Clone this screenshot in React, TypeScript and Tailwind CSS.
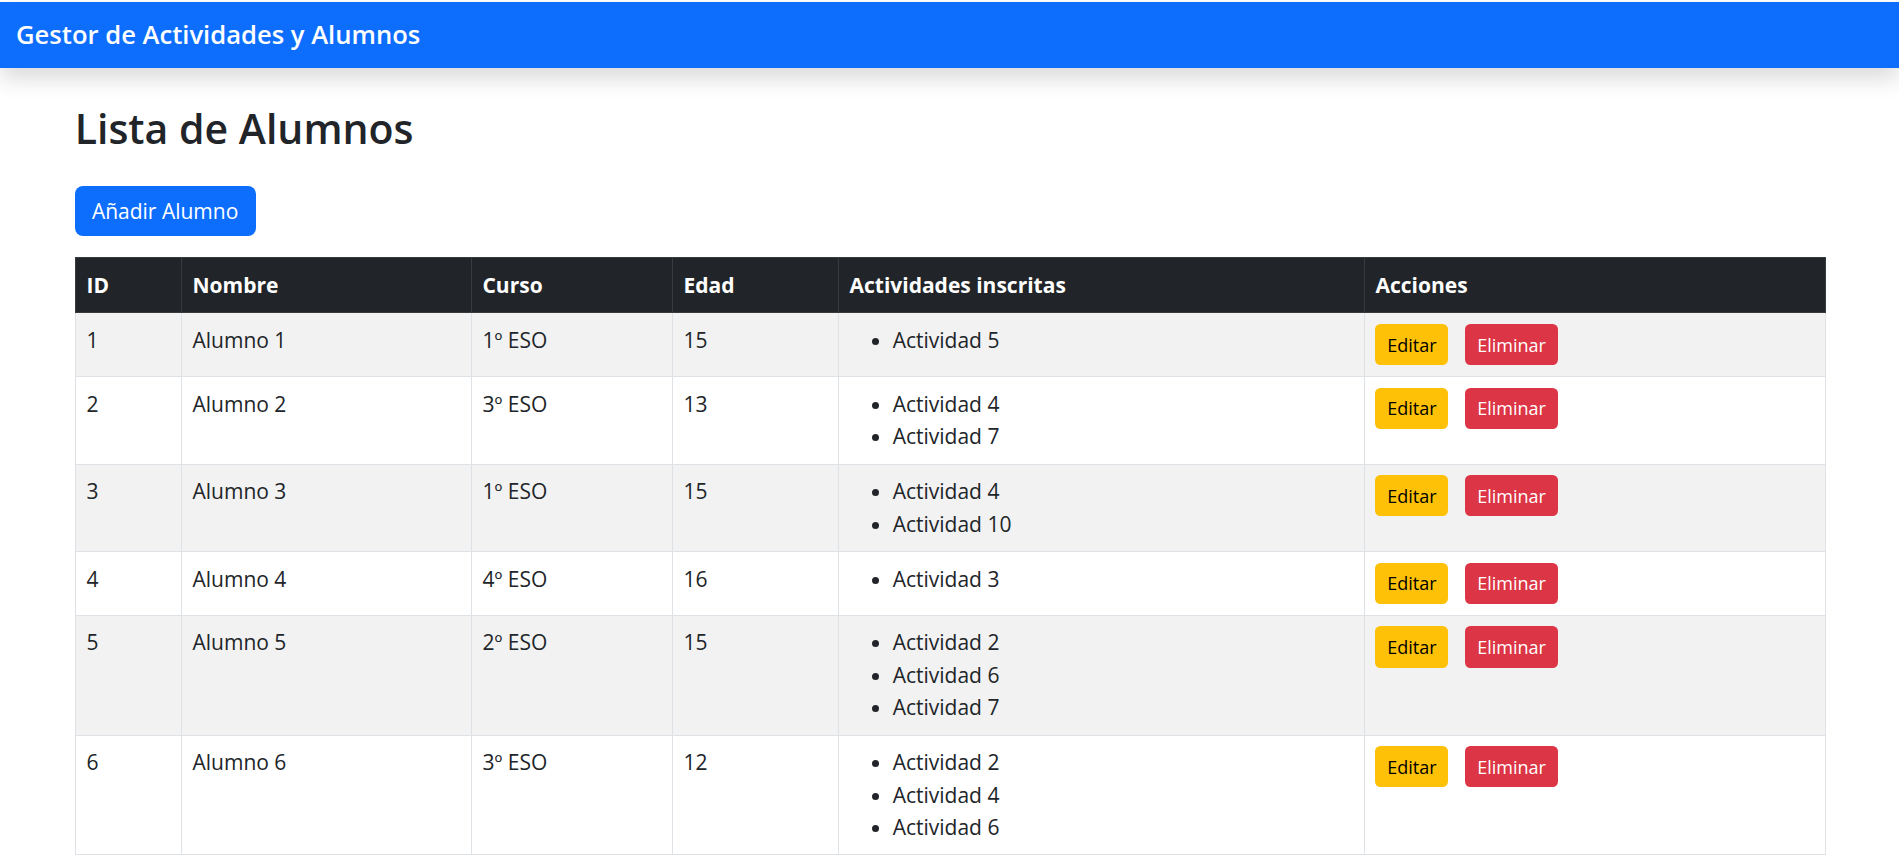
import React from 'react';

type Alumno = {
  id: number;
  nombre: string;
  curso: string;
  edad: number;
  actividades: string[];
};

const alumnos: Alumno[] = [
  { id: 1, nombre: 'Alumno 1', curso: '1º ESO', edad: 15, actividades: ['Actividad 5'] },
  { id: 2, nombre: 'Alumno 2', curso: '3º ESO', edad: 13, actividades: ['Actividad 4', 'Actividad 7'] },
  { id: 3, nombre: 'Alumno 3', curso: '1º ESO', edad: 15, actividades: ['Actividad 4', 'Actividad 10'] },
  { id: 4, nombre: 'Alumno 4', curso: '4º ESO', edad: 16, actividades: ['Actividad 3'] },
  { id: 5, nombre: 'Alumno 5', curso: '2º ESO', edad: 15, actividades: ['Actividad 2', 'Actividad 6', 'Actividad 7'] },
  { id: 6, nombre: 'Alumno 6', curso: '3º ESO', edad: 12, actividades: ['Actividad 2', 'Actividad 4', 'Actividad 6'] },
];

const columnas = [
  { label: 'ID', w: 'w-[106px]' },
  { label: 'Nombre', w: 'w-[290px]' },
  { label: 'Curso', w: 'w-[201px]' },
  { label: 'Edad', w: 'w-[166px]' },
  { label: 'Actividades inscritas', w: 'w-[526px]' },
  { label: 'Acciones', w: 'w-[461px]' },
];

export default function App() {
  return (
    <div className="min-h-screen bg-white pt-[2px] font-['Open_Sans','Noto_Sans',sans-serif] text-[#212529]">
      {/* Navbar */}
      <nav className="relative z-10 flex h-[66px] items-center bg-[#0d6efd] px-[16px] shadow-[0_10.8px_21.6px_rgba(0,0,0,0.15)]">
        <span className="text-[25.6px] font-semibold leading-[40px] text-white">Gestor de Actividades y Alumnos</span>
      </nav>

      <div className="mx-auto w-[1782px] px-[16.2px] pt-[35px]">
        <h1 className="mb-[31px] text-[41px] font-semibold leading-[51.84px]">Lista de Alumnos</h1>

        <button className="mb-[21px] rounded-[8px] border border-transparent bg-[#0d6efd] px-[16.2px] py-[8.1px] text-[21px] leading-[32.4px] text-white">
          Añadir Alumno
        </button>

        <table className="w-[1750px] table-fixed border-collapse text-[21px] leading-[32.4px]">
          <thead>
            <tr className="bg-[#212529] text-white">
              {columnas.map((c) => (
                <th
                  key={c.label}
                  className={`${c.w} border border-[#373b3e] p-[10.8px] text-left align-top font-bold`}
                >
                  {c.label}
                </th>
              ))}
            </tr>
          </thead>
          <tbody>
            {alumnos.map((a, idx) => (
              <tr key={a.id} className={idx % 2 === 0 ? 'bg-[#f2f2f2]' : 'bg-white'}>
                <td className="border border-[#dee2e6] p-[10.8px] align-top">{a.id}</td>
                <td className="border border-[#dee2e6] p-[10.8px] align-top">{a.nombre}</td>
                <td className="border border-[#dee2e6] p-[10.8px] align-top">{a.curso}</td>
                <td className="border border-[#dee2e6] p-[10.8px] align-top">{a.edad}</td>
                <td className="border border-[#dee2e6] p-[10.8px] align-top">
                  <ul className="m-0 list-disc pl-[43.2px]">
                    {a.actividades.map((act) => (
                      <li key={act}>{act}</li>
                    ))}
                  </ul>
                </td>
                <td className="border border-[#dee2e6] p-[10.8px] align-top">
                  <div className="flex items-start gap-[17px]">
                    <button className="rounded-[5.4px] border border-transparent bg-[#ffc107] px-[10.8px] py-[5.4px] text-[18px] leading-[28.35px] text-black">
                      Editar
                    </button>
                    <button className="rounded-[5.4px] border border-transparent bg-[#dc3545] px-[10.8px] py-[5.4px] text-[18px] leading-[28.35px] text-white">
                      Eliminar
                    </button>
                  </div>
                </td>
              </tr>
            ))}
          </tbody>
        </table>
      </div>
    </div>
  );
}
